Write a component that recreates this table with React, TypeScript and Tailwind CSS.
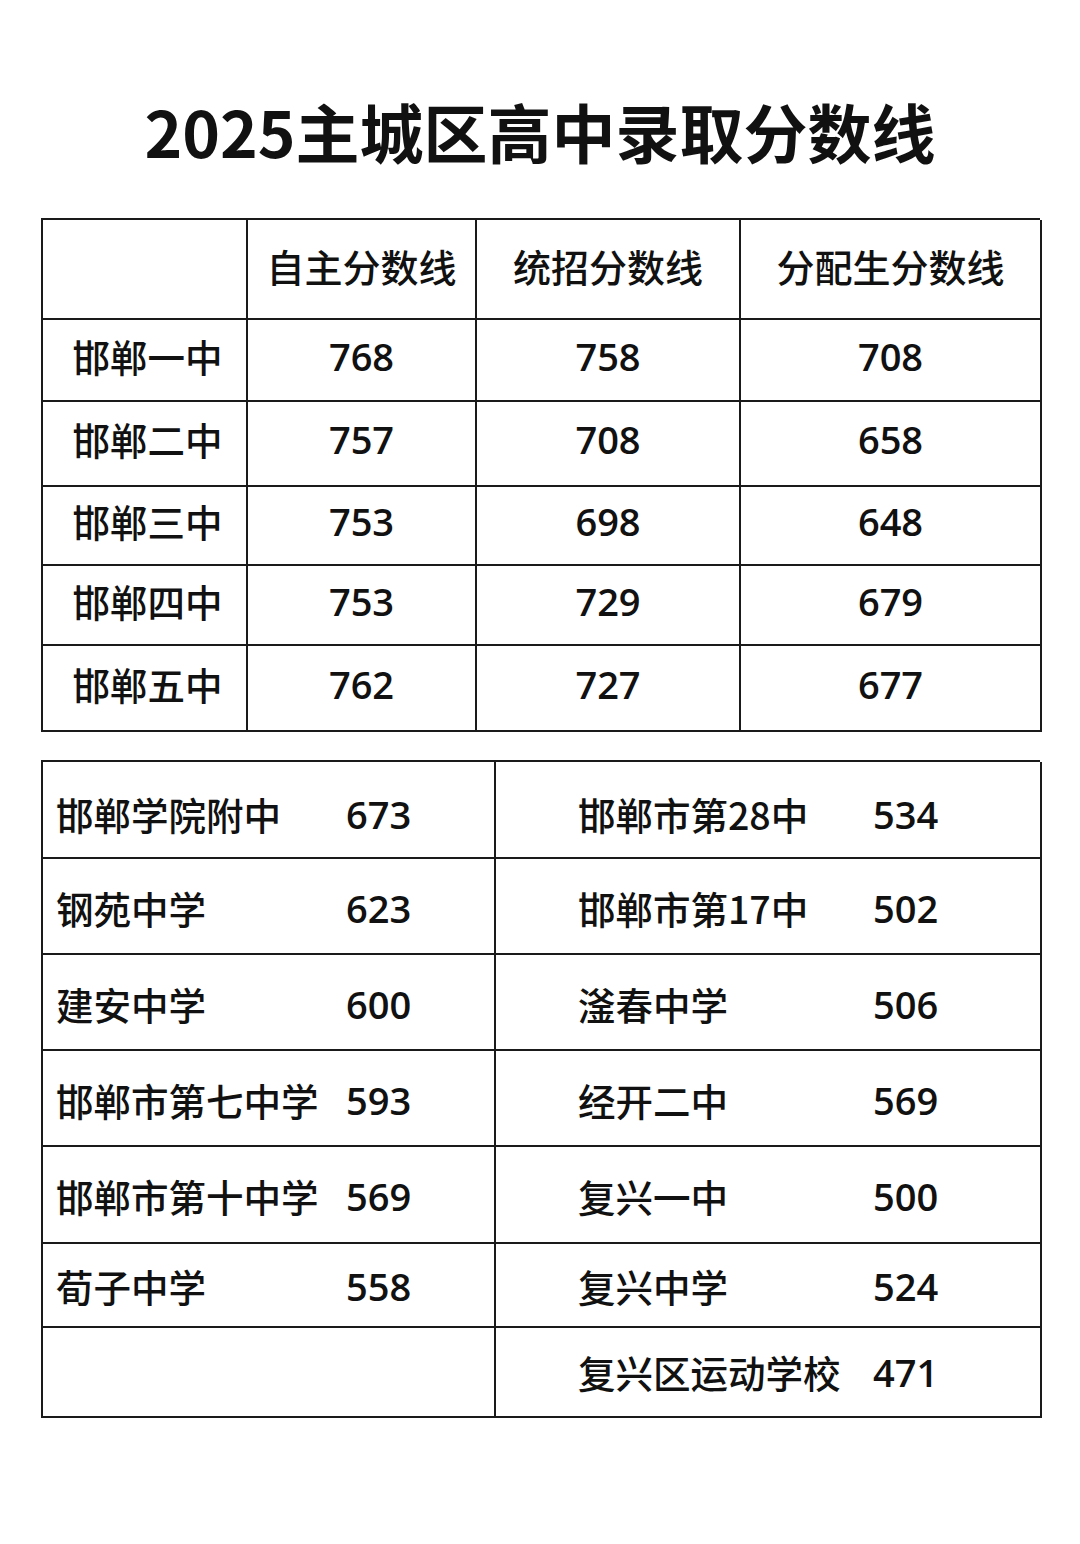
const font = { fontFamily: '"Noto Sans CJK SC", "Noto Sans", sans-serif' };
const numFont = { fontFamily: '"Open Sans", "Noto Sans CJK SC", sans-serif' };

const topRows = [
  { name: "邯郸一中", a: "768", b: "758", c: "708", h: "h-[82px]" },
  { name: "邯郸二中", a: "757", b: "708", c: "658", h: "h-[85px]" },
  { name: "邯郸三中", a: "753", b: "698", c: "648", h: "h-[79px]" },
  { name: "邯郸四中", a: "753", b: "729", c: "679", h: "h-[80px]" },
  { name: "邯郸五中", a: "762", b: "727", c: "677", h: "h-[86px]" },
];

const bottomRows = [
  { l: ["邯郸学院附中", "673"], r: ["邯郸市第28中", "534"], h: "h-[97px] pt-[10px]" },
  { l: ["钢苑中学", "623"], r: ["邯郸市第17中", "502"], h: "h-[96px] pt-[4px]" },
  { l: ["建安中学", "600"], r: ["滏春中学", "506"], h: "h-[96px] pt-[4px]" },
  { l: ["邯郸市第七中学", "593"], r: ["经开二中", "569"], h: "h-[96px] pt-[4px]" },
  { l: ["邯郸市第十中学", "569"], r: ["复兴一中", "500"], h: "h-[97px] pt-[4px]" },
  { l: ["荀子中学", "558"], r: ["复兴中学", "524"], h: "h-[84px] pt-[2px]" },
  { l: null, r: ["复兴区运动学校", "471"], h: "h-[90px]" },
];

const cell = "flex items-center justify-center border-r-2 border-b-2 border-[#1a1a1a] pb-[8px]";
const num = "text-[38px] font-semibold";

export default function App() {
  return (
    <div className="w-[1080px] h-[1544px] bg-white text-[#111]" style={font}>
      <h1 className="pt-[88px] h-[218px] text-center text-[64px] font-bold leading-[84px]">
        2025主城区高中录取分数线
      </h1>

      <div className="mx-[41px] w-[999px] border-t-2 border-l-2 border-[#1a1a1a] text-[37.5px] font-medium">
        <div className="grid grid-cols-[205px_229px_264px_301px] h-[100px] text-[38px]">
          <div className={cell}></div>
          <div className={cell}>自主分数线</div>
          <div className={cell}>统招分数线</div>
          <div className={cell}>分配生分数线</div>
        </div>
        {topRows.map((row) => (
          <div key={row.name} className={`grid grid-cols-[205px_229px_264px_301px] ${row.h}`}>
            <div className={`${cell} pl-[6px]`}>{row.name}</div>
            <div className={`${cell} ${num}`} style={numFont}>{row.a}</div>
            <div className={`${cell} ${num}`} style={numFont}>{row.b}</div>
            <div className={`${cell} ${num}`} style={numFont}>{row.c}</div>
          </div>
        ))}
      </div>

      <div className="mx-[41px] mt-[28px] w-[999px] border-t-2 border-l-2 border-[#1a1a1a] text-[37.5px] font-medium">
        {bottomRows.map((row, i) => (
          <div key={i} className="grid grid-cols-[453px_546px]">
            <div className={`flex items-center border-r-2 border-b-2 border-[#1a1a1a] pl-[13px] ${row.h}`}>
              {row.l && (
                <>
                  <span className="w-[290px]">{row.l[0]}</span>
                  <span className={num} style={numFont}>{row.l[1]}</span>
                </>
              )}
            </div>
            <div className={`flex items-center border-r-2 border-b-2 border-[#1a1a1a] pl-[82px] ${row.h}`}>
              <span className="w-[295px]">{row.r[0]}</span>
              <span className={num} style={numFont}>{row.r[1]}</span>
            </div>
          </div>
        ))}
      </div>
    </div>
  );
}
